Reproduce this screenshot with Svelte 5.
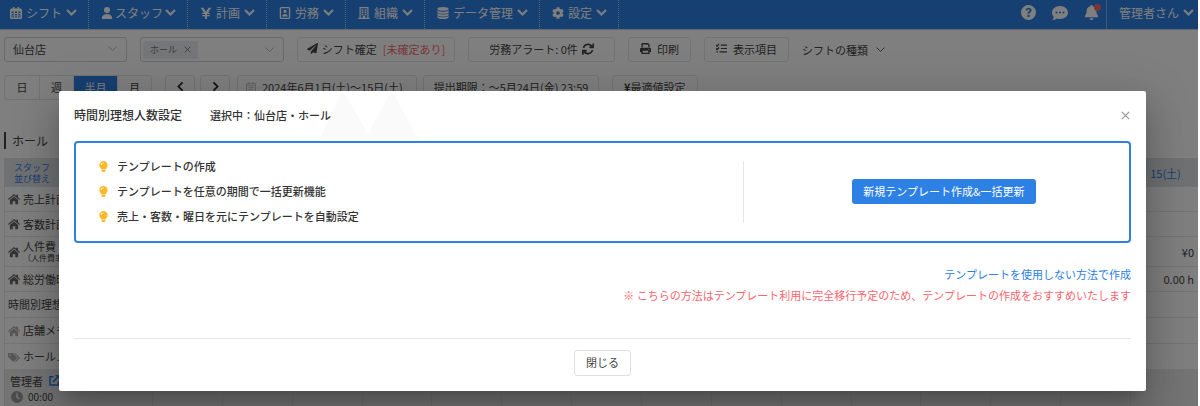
<script>
    const icons = {
        calendar: { box: '0 0 16 16', d: 'M4 0h2v2h4V0h2v2h2a2 2 0 0 1 2 2v10a2 2 0 0 1-2 2H2a2 2 0 0 1-2-2V4a2 2 0 0 1 2-2h2zM2 6v2h3V6zm4.500 0v2h3V6zM11 6v2h3V6zM2 9.200v2h3v-2zm4.500 0v2h3v-2zm4.500 0v2h3v-2zM2 12.400V14h3v-1.600zm4.500 0V14h3v-1.600zm4.500 0V14h3v-1.600z' },
        user: { box: '0 0 448 512', d: 'M224 256A128 128 0 1 0 224 0a128 128 0 1 0 0 256zm-45.700 48C79.800 304 0 383.800 0 482.300C0 498.700 13.300 512 29.700 512H418.300c16.400 0 29.700-13.300 29.700-29.700C448 383.800 368.200 304 269.700 304H178.300z' },
        yen: { box: '0 0 16 16', d: 'M1 1h3.500L8 6.400 11.500 1H15l-4.300 6.500H13v1.700H9.300v1.300H13v1.700H9.300V16H6.700v-3.800H3v-1.700h3.700V9.200H3V7.500h2.300z' },
        badge: { box: '0 0 16 16', d: 'M3 0h10a2 2 0 0 1 2 2v12a2 2 0 0 1-2 2H3a2 2 0 0 1-2-2V2a2 2 0 0 1 2-2zM2.800 1.800v12.400h10.400V1.800zM8 3.600a2.200 2.200 0 1 1 0 4.400 2.200 2.200 0 0 1 0-4.400zM4.300 12.500c0-2 1.200-3.300 3.700-3.300s3.700 1.300 3.700 3.300z' },
        building: { box: '0 0 16 16', d: 'M2 0h12v14.400h1.500V16H.5v-1.600H2zM3.600 1.600v12.800h2.800v-2.600h3.200v2.600h2.800V1.600zM4.800 3h2.400v2H4.800zm4 0h2.400v2H8.800zm-4 3h2.400v2H4.800zm4 0h2.400v2H8.800zm-4 3h2.400v2H4.800zm4 0h2.400v2H8.800z' },
        database: { box: '0 0 16 16', d: 'M8 0c4.400 0 7.500 1 7.500 2.500S12.400 5 8 5 .5 4 .5 2.500 3.600 0 8 0zM.5 4.800C2 6 5 6.500 8 6.500s6-.5 7.500-1.700v1.700C15.500 8 12.400 9 8 9S.5 8 .5 6.500zm0 3.600C2 9.600 5 10.100 8 10.100s6-.5 7.500-1.700v1.800c0 1.500-3.100 2.400-7.500 2.400S.5 11.700.5 10.200zm0 3.600C2 13.200 5 13.700 8 13.700s6-.5 7.500-1.700v1.500C15.500 15 12.400 16 8 16S.5 15 .5 13.500z' },
        cog: { box: '0 0 512 512', d: 'M487.400 315.700l-42.600-24.600c4.300-23.200 4.300-47 0-70.200l42.600-24.600c4.900-2.800 7.100-8.600 5.500-14-11.100-35.600-30-67.800-54.700-94.600-3.800-4.100-10-5.100-14.800-2.300L380.800 110c-17.900-15.400-38.500-27.300-60.800-35.100V25.800c0-5.600-3.900-10.500-9.400-11.700-36.700-8.200-74.300-7.800-109.200 0-5.500 1.200-9.400 6.100-9.400 11.700V75c-22.200 7.900-42.800 19.800-60.800 35.100L88.700 85.500c-4.900-2.800-11-1.900-14.800 2.300-24.700 26.700-43.600 58.900-54.700 94.600-1.700 5.400.6 11.200 5.500 14L67.300 221c-4.300 23.200-4.300 47 0 70.200l-42.600 24.600c-4.900 2.800-7.100 8.600-5.500 14 11.100 35.600 30 67.800 54.700 94.600 3.800 4.100 10 5.100 14.800 2.300l42.600-24.600c17.900 15.400 38.500 27.300 60.800 35.100v49.200c0 5.600 3.900 10.500 9.400 11.700 36.700 8.200 74.300 7.800 109.200 0 5.500-1.200 9.400-6.100 9.400-11.700v-49.200c22.200-7.900 42.800-19.800 60.800-35.100l42.600 24.600c4.900 2.800 11 1.900 14.800-2.300 24.700-26.700 43.600-58.900 54.700-94.600 1.500-5.500-.7-11.300-5.600-14.100zM256 336c-44.100 0-80-35.900-80-80s35.900-80 80-80 80 35.900 80 80-35.900 80-80 80z' },
        help: { box: '0 0 16 16', d: 'M8 0a8 8 0 1 1 0 16A8 8 0 0 1 8 0zM4.900 5.900h2c0-.9.500-1.300 1.200-1.300s1.100.4 1.100 1c0 1.300-2.200 1.300-2.200 3.400v.4h2v-.3c0-1.200 2.300-1.500 2.300-3.600C11.300 3.900 10 2.800 8.200 2.800 6.200 2.800 4.900 4 4.900 5.900zM8 10.500a1.200 1.200 0 1 0 0 2.500 1.200 1.200 0 0 0 0-2.500z' },
        comment: { box: '0 0 16 16', d: 'M8 1c4.400 0 8 2.900 8 6.500S12.400 14 8 14c-1.200 0-2.300-.2-3.300-.6C3.600 14.300 2 15 .3 15c.8-.9 1.400-1.900 1.500-3C.7 10.800 0 9.200 0 7.500 0 3.900 3.600 1 8 1zM4.500 6.500a1 1 0 1 0 0 2.100 1 1 0 0 0 0-2.100zm3.500 0a1 1 0 1 0 0 2.100 1 1 0 0 0 0-2.100zm3.500 0a1 1 0 1 0 0 2.100 1 1 0 0 0 0-2.100z' },
        bell: { box: '0 0 16 16', d: 'M7 0h2v1.200c2.500.5 4.200 2.400 4.200 5 0 3 .8 4.300 1.800 5.300v1.500H1v-1.500c1-1 1.800-2.300 1.800-5.300 0-2.600 1.700-4.500 4.200-5zM6 14h4a2 2 0 0 1-4 0z' },
        plane: { box: '0 0 512 512', d: 'M476 3.200L12.500 270.600c-18.100 10.400-15.800 35.600 2.200 43.200L121 358.400l287.300-253.200c5.500-4.900 13.300 2.600 8.600 8.300L176 407v80.500c0 23.600 28.500 32.900 42.500 15.800L282 426l124.600 52.200c14.200 6 30.400-2.900 33-18.200l72-432C515 7.800 493.300-6.800 476 3.200z' },
        print: { box: '0 0 16 16', d: 'M2 1.500A1.500 1.500 0 0 1 3.500 0h8L14 2.500V6h-2V3.300L10.700 2H4v4H2zM2 7h12a2 2 0 0 1 2 2v4h-2v3H2v-3H0V9a2 2 0 0 1 2-2zm2 4.200V14h8v-2.800zM13 8.300a.8.800 0 1 0 0 1.600.8.800 0 0 0 0-1.600z' },
        home: { box: '0 0 16 16', d: 'M8 1.200l3 2.500V2.300h2.300v3.400L16 8l-1 1.200-7-5.800-7 5.800L0 8zM8 4.700l5.500 4.600V15H9.700v-4H6.300v4H2.500V9.300z' },
        tags: { box: '0 0 16 16', d: 'M0 2.500h6.200L12.500 9 7.200 14.500 0 7.500zM2.800 4.200a1.100 1.100 0 1 0 0 2.300 1.100 1.100 0 0 0 0-2.300zM7.800 2.500h1.400L16 9l-5.500 5.500-1-.8L13.800 9z' },
        clock: { box: '0 0 16 16', d: 'M8 0a8 8 0 1 1 0 16A8 8 0 0 1 8 0zM7 3v5.600l3.600 2.700 1.100-1.500-2.700-2V3z' },
        bulb: { box: '0 0 16 20', d: 'M8 0a7.500 7.500 0 0 1 7.500 7.500c0 3.200-2.500 4.500-3.200 7.500H3.700C3 12 .5 10.700.5 7.500A7.500 7.500 0 0 1 8 0zM4.300 16h7.400v1.500L10 20H6l-1.700-2.500zM3 7.200h1.600C4.600 5.400 6 4 8 4V2.600C5.100 2.600 3 4.600 3 7.200z' },
        // stroked icons
        chevron: { box: '0 0 16 16', s: 'M1.500 4.500L8 11l6.500-6.500', w: 3 },
        down: { box: '0 0 16 16', s: 'M1 4.500l7 7 7-7', w: 1.500 },
        left: { box: '0 0 16 16', s: 'M11 2L5 8l6 6', w: 2.500 },
        right: { box: '0 0 16 16', s: 'M5 2l6 6-6 6', w: 2.500 },
        close: { box: '0 0 16 16', s: 'M1.500 1.500l13 13M14.500 1.500l-13 13', w: 2 },
        refresh: { box: '0 0 16 16', s: 'M2 6.500A6.300 6.300 0 0 1 13.500 5M15 .5v5.300H9.700M14 9.500A6.300 6.300 0 0 1 2.500 11M1 15.500v-5.300h5.300', w: 2.300 },
        list: { box: '0 0 16 16', s: 'M7 3h9M7 8h9M5 13h11M0 3l1.500 1.500L4.500 1.500M0 8l1.500 1.500L4.500 6.500M.5 13h2', w: 1.800 },
        external: { box: '0 0 16 16', s: 'M6.500 2.500H1.500v12h12V9.500M9.500 1.200h5.300v5.300M14.500 1.500L6 10', w: 2.300 },
        date: { box: '0 0 16 16', s: 'M1 2.500h14v12.500H1zM1 6h14M4.500 0v4M11.500 0v4M4 9h8M4 12h8', w: 1.200 }
    };

    const menus = [
        { icon: 'calendar', label: 'シフト' },
        { icon: 'user', label: 'スタッフ', tight: true },
        { icon: 'yen', label: '計画' },
        { icon: 'badge', label: '労務' },
        { icon: 'building', label: '組織' },
        { icon: 'database', label: 'データ管理' },
        { icon: 'cog', label: '設定' }
    ];

    const periods = ['日', '週', '半月', '月'];
    let period = $state('半月');

    const weekdays = ['土', '日', '月', '火', '水', '木', '金'];
    const days = Array.from({ length: 15 }, (_, i) => `${i + 1}(${weekdays[i % 7]})`);

    const rows = [
        { icon: 'home', label: '売上計画', size: 'short' },
        { icon: 'home', label: '客数計画', size: 'short' },
        { icon: 'home', label: '人件費', sub: '（人件費率）', value: '¥0', size: 'tall' },
        { icon: 'home', label: '総労働時間', value: '0.00 h', size: 'short' },
        { label: '時間別理想人数', size: 'mid' },
        { icon: 'home', label: '店舗メモ', size: 'mid', faint: true },
        { icon: 'tags', label: 'ホールメモ', size: 'mid', faint: true }
    ];

    const features = [
        'テンプレートの作成',
        'テンプレートを任意の期間で一括更新機能',
        '売上・客数・曜日を元にテンプレートを自動設定'
    ];

    let open = $state(true);

    function closeDialog() {
        open = false;
    }
</script>

{#snippet icon(name, size = 12)}
    <svg class="icon" viewBox={icons[name].box} width={size} height={size} aria-hidden="true">
        {#if icons[name].d}
            <path d={icons[name].d} fill="currentColor" fill-rule="evenodd" />
        {:else}
            <path d={icons[name].s} fill="none" stroke="currentColor" stroke-width={icons[name].w} />
        {/if}
    </svg>
{/snippet}

<div class="page">
    <header class="navbar">
        <nav class="menus">
            {#each menus as menu}
                <button class="menu" class:tight={menu.tight}>
                    {@render icon(menu.icon)}
                    <span>{menu.label}</span>
                    {@render icon('chevron', 11)}
                </button>
            {/each}
        </nav>
        <div class="tools">
            <button class="tool" aria-label="ヘルプ">{@render icon('help', 15)}</button>
            <button class="tool" aria-label="チャット">{@render icon('comment', 16)}</button>
            <button class="tool" aria-label="お知らせ">{@render icon('bell', 15)}<span class="dot"></span></button>
        </div>
        <button class="account"><span>管理者さん</span>{@render icon('chevron', 11)}</button>
    </header>

    <main>
        <div class="toolbar">
            <button class="box store"><span>仙台店</span>{@render icon('down', 9)}</button>
            <div class="box section">
                <span class="tag">ホール <button aria-label="ホールを外す">{@render icon('close', 7)}</button></span>
                {@render icon('down', 9)}
            </div>
            <button class="box confirm">{@render icon('plane', 11)}<span>シフト確定</span><span class="red">[未確定あり]</span></button>
            <button class="box alert"><span>労務アラート: 0件</span>{@render icon('refresh', 12)}</button>
            <button class="box print">{@render icon('print', 11)}<span>印刷</span></button>
            <button class="box print">{@render icon('list', 11)}<span>表示項目</span></button>
            <button class="kind"><span>シフトの種類</span>{@render icon('down', 9)}</button>
        </div>

        <div class="toolbar second">
            <div class="periods">
                {#each periods as p}
                    <button class:active={p === period} onclick={() => (period = p)}>{p}</button>
                {/each}
            </div>
            <div class="range">
                <button class="box arrow" aria-label="前へ">{@render icon('left', 11)}</button>
                <button class="box arrow" aria-label="次へ">{@render icon('right', 11)}</button>
                <button class="box date"><span class="pale">{@render icon('date', 10)}</span><span>2024年6月1日(土)〜15日(土)</span></button>
                <button class="box deadline">提出期限：〜5月24日(金) 23:59</button>
            </div>
            <button class="box best"><b>¥</b>最適値設定</button>
        </div>

        <h1>ホール</h1>

        <table>
            <thead>
                <tr>
                    <th class="first"><a href="#sort">スタッフ<br />並び替え</a></th>
                    {#each days as day}
                        <th>{day}</th>
                    {/each}
                </tr>
            </thead>
            <tbody>
                {#each rows as row}
                    <tr class={row.size}>
                        <th scope="row" class:faint={row.faint}>
                            <div class="name">
                                {#if row.icon}{@render icon(row.icon, 12)}{/if}
                                <span>{row.label}{#if row.sub}<small>{row.sub}</small>{/if}</span>
                            </div>
                        </th>
                        <td colspan="15">{row.value ?? ''}</td>
                    </tr>
                {/each}
                <tr class="staff">
                    <th scope="row">
                        <div class="person">管理者 <a href="#staff" aria-label="管理者を開く">{@render icon('external', 11)}</a></div>
                        <div class="time">{@render icon('clock', 12)}<span>00:00</span></div>
                    </th>
                    {#each days as day}
                        <td></td>
                    {/each}
                </tr>
            </tbody>
        </table>
    </main>

    {#if open}
        <div class="overlay">
            <div class="dialog" role="dialog" aria-modal="true" aria-labelledby="dialog-title">
                <svg class="peaks" viewBox="0 0 98 48" width="98" height="48" aria-hidden="true">
                    <path d="M0 48L20 4q2-4 5 0l22 37q1 1 2 0L69 4q3-4 5 0l24 44z" fill="#fafafa" />
                </svg>
                <div class="dialog-head">
                    <h2 id="dialog-title">時間別理想人数設定</h2>
                    <span class="selected">選択中：仙台店・ホール</span>
                    <button class="x" aria-label="閉じる" onclick={closeDialog}>{@render icon('close', 9)}</button>
                </div>

                <div class="panel">
                    <ul>
                        {#each features as feature}
                            <li><span class="bulb">{@render icon('bulb', 11)}</span>{feature}</li>
                        {/each}
                    </ul>
                    <div class="action">
                        <button class="primary">新規テンプレート作成&amp;一括更新</button>
                    </div>
                </div>

                <div class="other">
                    <a href="#manual">テンプレートを使用しない方法で作成</a>
                    <p>※ こちらの方法はテンプレート利用に完全移行予定のため、テンプレートの作成をおすすめいたします</p>
                </div>

                <div class="dialog-foot">
                    <button class="close" onclick={closeDialog}>閉じる</button>
                </div>
            </div>
        </div>
    {/if}
</div>

<style>
    :global(body) {
        background: #fff;
    }
    .page {
        position: relative;
        height: 100vh;
        margin-right: 2px;
        overflow: hidden;
        font-family: "Noto Sans CJK JP", sans-serif;
        font-size: 11px;
        line-height: 16px;
        color: #444;
        background: #fff;
    }
    button {
        font: inherit;
        color: inherit;
        background: none;
        border: 0;
        padding: 0;
        margin: 0;
        white-space: nowrap;
        cursor: pointer;
    }
    a {
        color: #2d80e4;
        text-decoration: none;
    }
    .icon {
        display: block;
        flex: none;
    }

    /* top bar */
    .navbar {
        display: flex;
        height: 30px;
        background: #2d80e4;
        color: #fff;
        font-size: 12px;
        border-bottom: 1px solid #c8ccd2;
        box-sizing: border-box;
    }
    .menus {
        display: flex;
        flex: 1;
    }
    .menu {
        display: flex;
        align-items: center;
        gap: 4px;
        padding: 0 11px 4px 12px;
        border-right: 1px dotted #a9cbf3;
    }
    .menu:first-child {
        padding-left: 10px;
    }
    .menu.tight {
        gap: 2px;
    }
    .tools {
        display: flex;
        align-items: center;
        gap: 16px;
        padding: 0 7px 4px 0;
    }
    .tool {
        position: relative;
    }
    .dot {
        position: absolute;
        top: -1px;
        right: -2px;
        width: 7px;
        height: 7px;
        border-radius: 50%;
        background: #f56c6c;
    }
    .account {
        display: flex;
        align-items: center;
        gap: 4px;
        padding: 0 4px 4px 12px;
        border-left: 1px solid #78aeee;
    }

    /* toolbars */
    main {
        padding: 7px 0 0 4px;
    }
    .toolbar {
        display: flex;
        gap: 13px;
        height: 25px;
    }
    .second {
        margin-top: 13px;
    }
    .box {
        display: flex;
        align-items: center;
        justify-content: center;
        gap: 4px;
        box-sizing: border-box;
        border: 1px solid #e4e7ed;
        border-radius: 3px;
        padding: 0 11px 2px;
        white-space: nowrap;
    }
    .store,
    .section {
        justify-content: space-between;
        border-color: #d0d4dc;
        padding: 0 9px 2px 8px;
    }
    .store {
        width: 123px;
    }
    .section {
        width: 144px;
        padding: 0 9px 0 2px;
    }
    .store .icon,
    .section > .icon {
        color: #a8abb2;
    }
    .tag {
        display: flex;
        align-items: center;
        gap: 7px;
        padding: 1px 7px;
        font-size: 9px;
        color: #73767a;
        background: #ebedf1;
        border-radius: 2px;
    }
    .confirm {
        width: 158px;
    }
    .red {
        color: #f5686f;
        margin-left: 2px;
    }
    .alert {
        width: 147px;
    }
    .print {
        gap: 6px;
    }
    .kind {
        display: flex;
        align-items: center;
        gap: 8px;
    }
    .periods {
        display: flex;
        border: 1px solid #e4e7ed;
        border-radius: 3px;
        box-sizing: border-box;
        overflow: hidden;
    }
    .periods button {
        width: 34px;
        padding-bottom: 2px;
        border-left: 1px solid #e4e7ed;
    }
    .periods button:first-child {
        border-left: 0;
    }
    .periods button.active {
        width: 44px;
        color: #fff;
        background: #2d80e4;
    }
    .range {
        display: flex;
        gap: 5px;
    }
    .arrow {
        width: 30px;
        color: #222;
    }
    .date {
        width: 180px;
        margin-left: 2px;
        justify-content: flex-start;
        padding: 0 8px 2px;
        gap: 6px;
    }
    .pale {
        color: #b4b7bd;
    }
    .deadline {
        width: 176px;
        margin-left: 1px;
    }
    .best {
        gap: 0;
    }

    h1 {
        margin: 32px 0 9px;
        padding-left: 6px;
        border-left: 2px solid #444;
        font-size: 12px;
        font-weight: 400;
        line-height: 17px;
    }

    /* schedule table, the last day runs under the right edge */
    table {
        width: calc(100% + 3px);
        table-layout: fixed;
        border-collapse: collapse;
    }
    th,
    td {
        box-sizing: border-box;
        padding: 0;
        border: 1px solid #e8eaee;
        font-weight: 400;
        white-space: nowrap;
    }
    thead th {
        height: 28px;
        background: #e1e3e6;
        color: #2d80e4;
        border-color: #e1e3e6;
    }
    .first {
        width: 148px;
        padding-left: 9px;
        text-align: left;
        font-size: 9px;
        line-height: 11px;
    }
    tbody th {
        text-align: left;
        padding-left: 3px;
    }
    tbody td {
        text-align: right;
        padding-right: 6px;
    }
    .short {
        height: 25px;
    }
    .mid {
        height: 26px;
    }
    .tall {
        height: 30px;
    }
    .name {
        display: flex;
        align-items: center;
        gap: 3px;
    }
    .name span {
        line-height: 13px;
    }
    .name .icon {
        color: #666;
    }
    .faint .icon {
        color: #aaa;
    }
    small {
        display: block;
        font-size: 8px;
        line-height: 10px;
    }
    .staff th,
    .staff td {
        height: 38px;
        background: #e8e8e8;
        border-color: #dcdcdc;
    }
    .person,
    .time {
        display: flex;
        align-items: center;
        gap: 6px;
        padding-left: 2px;
    }
    .time {
        gap: 5px;
        padding-left: 3px;
        font-size: 10px;
    }
    .time .icon {
        color: #999;
    }

    /* dialog */
    .overlay {
        position: absolute;
        inset: 0;
        padding: 91px 52px 0 59px;
        background: rgba(0, 0, 0, 0.5);
    }
    .dialog {
        position: relative;
        padding: 15px;
        color: #444;
        background: #fff;
        border-radius: 2px;
        box-shadow: 0 11px 15px -7px rgba(0, 0, 0, 0.2), 0 24px 38px 3px rgba(0, 0, 0, 0.14), 0 9px 46px 8px rgba(0, 0, 0, 0.12);
    }
    .peaks {
        position: absolute;
        top: 0;
        left: 261px;
    }
    .dialog-head {
        position: relative;
        display: flex;
        align-items: center;
        height: 18px;
        color: #333;
        font-weight: 500;
    }
    h2 {
        margin: 0 28px 0 0;
        font-size: 12px;
        font-weight: 500;
    }
    .x {
        margin-left: auto;
        padding-right: 1px;
        color: #909399;
    }
    .panel {
        display: grid;
        grid-template-columns: 19fr 11fr;
        align-items: center;
        margin-top: 17px;
        padding: 11px 0 12px;
        border: 2px solid #2d80e4;
        border-radius: 4px;
    }
    ul {
        margin: 0;
        padding: 0 0 0 22px;
        list-style: none;
        color: #333;
        font-weight: 500;
    }
    li {
        display: flex;
        align-items: center;
        gap: 8px;
        line-height: 25px;
    }
    .bulb {
        color: #fdb827;
    }
    .action {
        display: flex;
        align-items: center;
        justify-content: center;
        height: 62px;
        padding-left: 15px;
        border-left: 1px solid #e4e7ed;
    }
    .primary {
        height: 25px;
        padding: 0 11px 2px;
        color: #fff;
        background: #2d80e4;
        border-radius: 3px;
    }
    .other {
        margin: 21px 0 32px;
        text-align: right;
        line-height: 21px;
    }
    .other p {
        margin: 0;
        color: #f9656e;
    }
    .dialog-foot {
        display: flex;
        justify-content: center;
        padding-top: 11px;
        border-top: 1px solid #e4e7ed;
    }
    .close {
        height: 26px;
        padding: 0 11px 2px;
        border: 1px solid #dcdfe6;
        border-radius: 3px;
    }
</style>
